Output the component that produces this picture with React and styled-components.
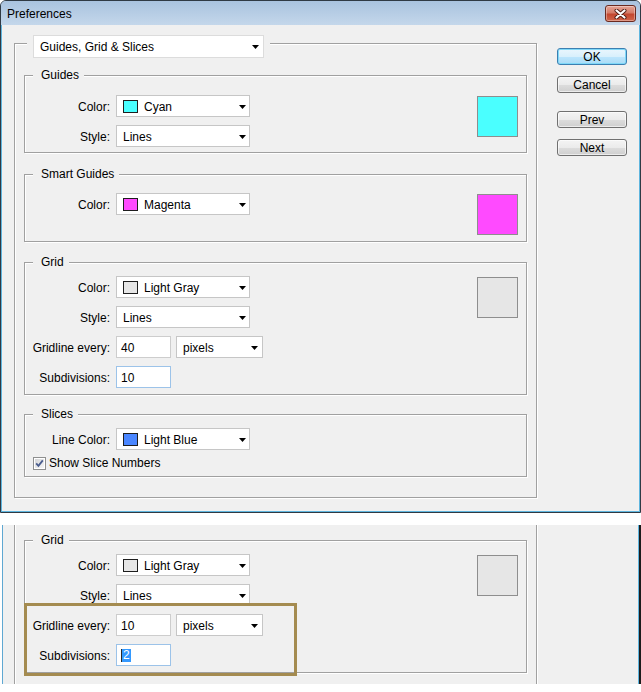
import React from 'react';
import styled, { createGlobalStyle } from 'styled-components';

const GlobalStyle = createGlobalStyle`
  html, body {
    margin: 0;
    padding: 0;
    background: #fff;
  }
  body {
    font-family: "Liberation Sans", Arial, sans-serif;
    font-size: 12px;
    color: #000;
  }
`;

const Page = styled.div`
  width: 641px;
  display: flex;
  flex-direction: column;
`;

const Window = styled.div`
  height: 513px;
  box-sizing: border-box;
  border: 1px solid #2f3a44;
  border-radius: 6px 6px 0 0;
  overflow: hidden;
  display: flex;
  flex-direction: column;
  background: #b9cfe7;
`;

const TitleBar = styled.div`
  height: 24px;
  flex: none;
  display: flex;
  align-items: flex-start;
  justify-content: space-between;
  background: linear-gradient(#a9c3df, #c4d7eb);
`;

const Title = styled.div`
  padding-left: 6px;
  line-height: 26px;
`;

const CloseButton = styled.div`
  width: 31px;
  height: 17px;
  box-sizing: border-box;
  margin: 4px 4px 0 0;
  border: 1px solid #6a2a20;
  border-radius: 3px;
  background: linear-gradient(#e4a496 0%, #d57c68 45%, #c3472f 55%, #d0664b 100%);
  box-shadow: inset 0 0 0 1px rgba(255, 255, 255, 0.35);
  display: flex;
  align-items: center;
  justify-content: center;
`;

const Client = styled.div`
  flex: 1;
  display: flex;
  align-items: flex-start;
  padding: 18px 0 0 12px;
  background: #f0f0f0;
  border: 1px solid #5fb6df;
  border-top: none;
`;

const etched = `
  border: 1px solid #a0a0a0;
  box-shadow: inset 1px 1px 0 #fff, 1px 1px 0 #fff;
`;

const MainFrame = styled.div`
  width: 523px;
  box-sizing: border-box;
  ${etched}
  padding: 0 9px 20px;
`;

const PanelCaption = styled.div`
  width: fit-content;
  margin: -9px 0 0 3px;
  padding: 0 6px;
  background: #f0f0f0;
`;

const Select = styled.div`
  width: ${(p) => p.$w}px;
  height: ${(p) => p.$h || 22}px;
  box-sizing: border-box;
  margin-left: ${(p) => p.$ml || 0}px;
  border: 1px solid ${(p) => p.$border || '#c6c6c6'};
  background: #fff;
  display: flex;
  align-items: center;
  padding-left: ${(p) => p.$pl || 6}px;
  padding-top: 1px;
  white-space: nowrap;
`;

const ArrowSlot = styled.span`
  margin-left: auto;
  margin-right: ${(p) => p.$mr || 3}px;
  display: flex;
`;

const ColorChip = styled.span`
  width: 15px;
  height: 13px;
  box-sizing: border-box;
  border: 1px solid #1e1e1e;
  background: ${(p) => p.$c};
  margin-right: 6px;
  flex: none;
`;

const GroupBox = styled.div`
  position: relative;
  ${etched}
  margin-top: ${(p) => p.$mt}px;
  padding-bottom: ${(p) => p.$pb}px;
`;

const GroupCaption = styled.div`
  width: fit-content;
  height: 14px;
  line-height: 15px;
  margin: -8px 0 0 8px;
  padding: 0 5px 0 8px;
  background: #f0f0f0;
`;

const GroupBody = styled.div`
  display: flex;
  align-items: flex-start;
  margin-top: ${(p) => p.$pt}px;
`;

const Fields = styled.div`
  flex: 1;
  display: flex;
  flex-direction: column;
  gap: 8px;
`;

const Row = styled.div`
  display: flex;
  align-items: center;
  height: 22px;
`;

const FieldLabel = styled.div`
  width: 85px;
  margin-right: 6px;
  padding-top: 1px;
  text-align: right;
  white-space: nowrap;
`;

const TextField = styled.div`
  width: 55px;
  height: 22px;
  box-sizing: border-box;
  border: 1px solid ${(p) => (p.$focus ? '#9cc3e9' : '#cdcdcd')};
  background: #fff;
  padding: 1px 0 0 4px;
  display: flex;
  align-items: center;
`;

const Selection = styled.span`
  background: #3399ff;
  color: #fff;
  line-height: 13px;
  padding: 0 1px;
  border-left: 1px solid #2a2a2a;
`;

const Swatch = styled.div`
  width: 41px;
  height: 41px;
  box-sizing: border-box;
  border: 1px solid #8e8e8e;
  background: ${(p) => p.$c};
  margin: 1px 8px 0 0;
  flex: none;
`;

const CheckRow = styled.label`
  display: flex;
  align-items: center;
  height: 16px;
  margin-top: -3px;
  padding-left: 8px;
  gap: 3px;
`;

const ButtonColumn = styled.div`
  display: flex;
  flex-direction: column;
  margin: 5px 0 0 20px;
`;

const DialogButton = styled.div`
  width: 70px;
  height: 17px;
  box-sizing: border-box;
  margin-top: ${(p) => p.$mt || 0}px;
  border: 1px solid ${(p) => (p.$primary ? '#3c7fb1' : '#707070')};
  border-radius: 3px;
  background: ${(p) =>
    p.$primary
      ? 'linear-gradient(#eaf6fd 0%, #d9f0fc 50%, #bee6fd 50%, #a9dbf6 100%)'
      : 'linear-gradient(#f4f4f4 0%, #ebebeb 50%, #dddddd 50%, #cfcfcf 100%)'};
  box-shadow: inset 0 0 0 1px ${(p) => (p.$primary ? '#7fd8f8' : 'rgba(255,255,255,0.6)')};
  text-align: center;
  line-height: 16px;
`;

const Snapshot = styled.div`
  height: 159px;
  margin: 12px 0 0 2px;
  width: 637px;
  box-sizing: border-box;
  background: #f0f0f0;
  border-left: 1px solid #5fa8d2;
  border-right: 1px solid #5fb6df;
  box-shadow: 1px 0 0 #1c1c1c, 2px 0 0 #1c1c1c;
`;

const SnapFrame = styled.div`
  width: 523px;
  height: 100%;
  box-sizing: border-box;
  margin-left: 11px;
  border-left: 1px solid #a0a0a0;
  border-right: 1px solid #a0a0a0;
  box-shadow: inset 1px 0 0 #fff, 1px 0 0 #fff;
  padding: 15px 9px 0;
`;

const Highlight = styled.div`
  position: absolute;
  left: -1px;
  top: 62px;
  width: 273px;
  height: 73px;
  box-sizing: border-box;
  border: 3px solid #a48b50;
  pointer-events: none;
`;

const DropArrow = () => (
  <svg width="7" height="4" viewBox="0 0 7 4">
    <path d="M0 0h7L3.5 4z" fill="#000" />
  </svg>
);

const Dropdown = ({ width, chip, arrowRight, ml, children }) => (
  <Select $w={width} $ml={ml}>
    {chip && <ColorChip $c={chip} />}
    <span>{children}</span>
    <ArrowSlot $mr={arrowRight}>
      <DropArrow />
    </ArrowSlot>
  </Select>
);

const CheckBox = () => (
  <svg width="13" height="13" viewBox="0 0 13 13">
    <defs>
      <linearGradient id="cbfill" x1="0" y1="0" x2="1" y2="1">
        <stop offset="0" stopColor="#d4d5d7" />
        <stop offset="1" stopColor="#f6f6f6" />
      </linearGradient>
    </defs>
    <rect x="0.5" y="0.5" width="12" height="12" fill="#fff" stroke="#8e8f8f" />
    <rect x="2" y="2" width="9" height="9" fill="url(#cbfill)" />
    <path d="M3.2 6.4 L5.4 8.8 L9.8 3.4" fill="none" stroke="#4a5d8e" strokeWidth="1.8" />
  </svg>
);

const CloseGlyph = () => (
  <svg width="13" height="10" viewBox="0 0 13 10">
    <path d="M2.5 1.5 L10.5 8.5 M10.5 1.5 L2.5 8.5" stroke="#4b1a12" strokeWidth="4" strokeLinecap="round" />
    <path d="M2.5 1.5 L10.5 8.5 M10.5 1.5 L2.5 8.5" stroke="#fff" strokeWidth="2.2" strokeLinecap="round" />
  </svg>
);

const Group = ({ title, mt, pt, pb, swatch, children, overlay }) => (
  <GroupBox $mt={mt} $pb={pb}>
    <GroupCaption>{title}</GroupCaption>
    <GroupBody $pt={pt}>
      <Fields>{children}</Fields>
      {swatch && <Swatch $c={swatch} />}
    </GroupBody>
    {overlay}
  </GroupBox>
);

const GridGroup = ({ mt, every, subdivisions, overlay }) => (
  <Group title="Grid" mt={mt} pt={7} pb={6} swatch="#e6e6e6" overlay={overlay}>
    <Row>
      <FieldLabel>Color:</FieldLabel>
      <Dropdown width={134} chip="#e6e6e6">Light Gray</Dropdown>
    </Row>
    <Row>
      <FieldLabel>Style:</FieldLabel>
      <Dropdown width={134}>Lines</Dropdown>
    </Row>
    <Row>
      <FieldLabel>Gridline every:</FieldLabel>
      <TextField>{every}</TextField>
      <Dropdown width={87} ml={5} arrowRight={4}>pixels</Dropdown>
    </Row>
    <Row>
      <FieldLabel>Subdivisions:</FieldLabel>
      <TextField $focus>{subdivisions}</TextField>
    </Row>
  </Group>
);

const buttons = [
  { label: 'OK', primary: true, mt: 0 },
  { label: 'Cancel', mt: 11 },
  { label: 'Prev', mt: 18 },
  { label: 'Next', mt: 11 },
];

export default function App() {
  return (
    <Page>
      <GlobalStyle />
      <Window>
        <TitleBar>
          <Title>Preferences</Title>
          <CloseButton>
            <CloseGlyph />
          </CloseButton>
        </TitleBar>
        <Client>
          <MainFrame>
            <PanelCaption>
              <Select $w={231} $h={23} $border="#dcdcdc">
                <span>Guides, Grid &amp; Slices</span>
                <ArrowSlot $mr={4}>
                  <DropArrow />
                </ArrowSlot>
              </Select>
            </PanelCaption>

            <Group title="Guides" mt={17} pt={13} pb={5} swatch="#4affff">
              <Row>
                <FieldLabel>Color:</FieldLabel>
                <Dropdown width={134} chip="#4affff">Cyan</Dropdown>
              </Row>
              <Row>
                <FieldLabel>Style:</FieldLabel>
                <Dropdown width={134}>Lines</Dropdown>
              </Row>
            </Group>

            <Group title="Smart Guides" mt={21} pt={12} pb={6} swatch="#ff4aff">
              <Row>
                <FieldLabel>Color:</FieldLabel>
                <Dropdown width={134} chip="#ff4aff">Magenta</Dropdown>
              </Row>
            </Group>

            <GridGroup mt={20} every="40" subdivisions="10" />

            <Group title="Slices" mt={19} pt={7} pb={5}>
              <Row>
                <FieldLabel>Line Color:</FieldLabel>
                <Dropdown width={134} chip="#4a86ff">Light Blue</Dropdown>
              </Row>
              <CheckRow>
                <CheckBox />
                <span>Show Slice Numbers</span>
              </CheckRow>
            </Group>
          </MainFrame>

          <ButtonColumn>
            {buttons.map((b) => (
              <DialogButton key={b.label} $primary={b.primary} $mt={b.mt}>
                {b.label}
              </DialogButton>
            ))}
          </ButtonColumn>
        </Client>
      </Window>

      <Snapshot>
        <SnapFrame>
          <GridGroup
            mt={0}
            every="10"
            subdivisions={<Selection>2</Selection>}
            overlay={<Highlight />}
          />
        </SnapFrame>
      </Snapshot>
    </Page>
  );
}
